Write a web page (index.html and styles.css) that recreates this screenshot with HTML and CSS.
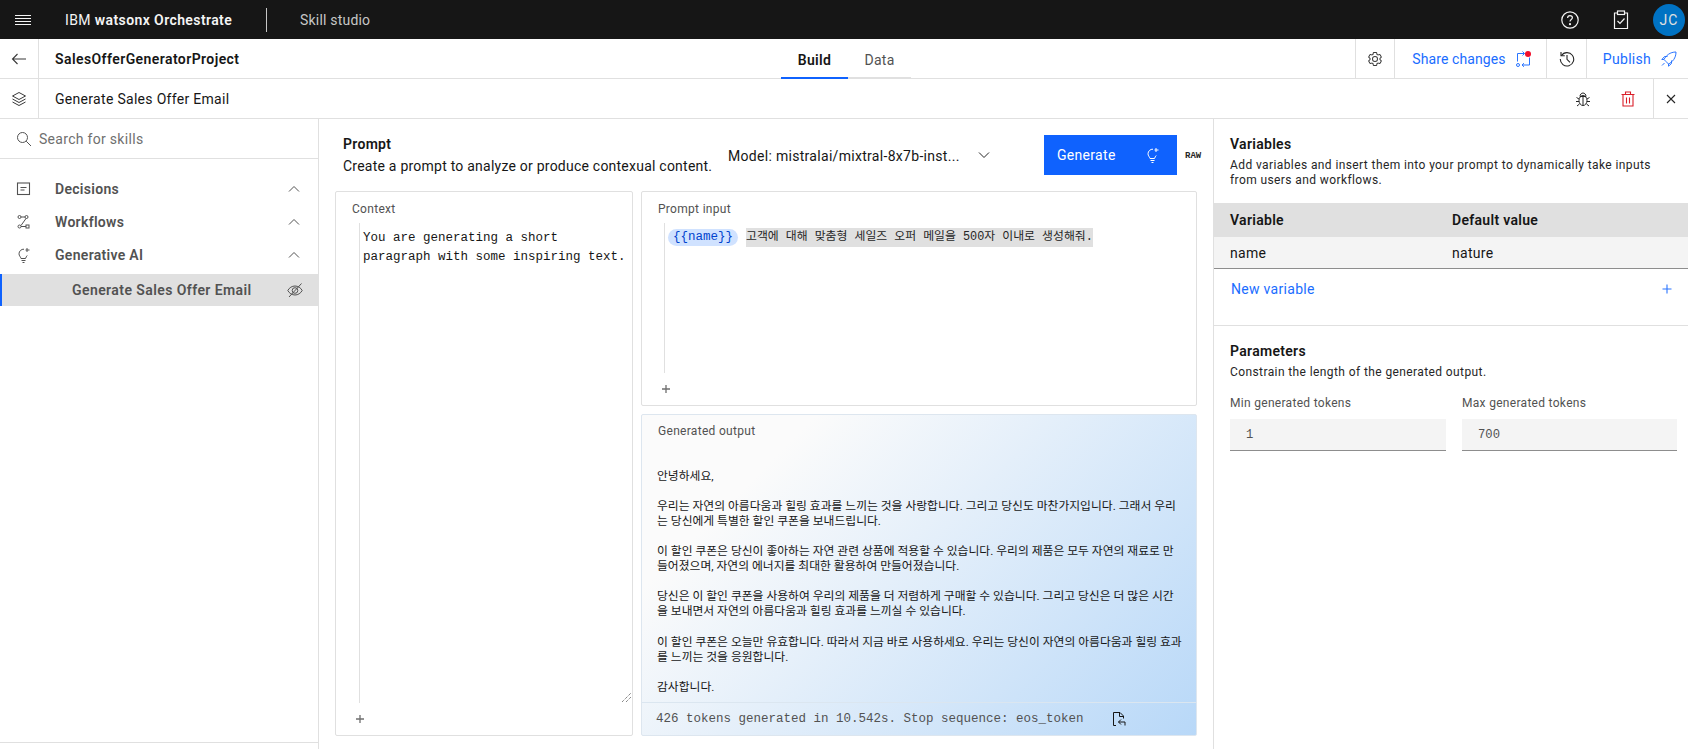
FILE: index.html
```html
<!DOCTYPE html>
<html lang="ko">
<head>
    <meta charset="UTF-8">
    <meta name="viewport" content="width=device-width, initial-scale=1.0">
    <title>Skill studio</title>
    <link rel="stylesheet" href="styles.css">
</head>
<body>
    <header class="topbar">
        <div class="topbar-menu">
            <svg width="20" height="20" viewBox="0 0 20 20" fill="none" stroke="#f4f4f4"><path d="M4 4.5h16M4 7.5h16M4 10.5h16M4 13.5h16" transform="translate(-2 1)"/></svg>
        </div>
        <div class="topbar-brand">IBM <b>watsonx Orchestrate</b></div>
        <div class="topbar-page">Skill studio</div>
        <div class="topbar-right">
            <svg class="topbar-help" width="20" height="20" viewBox="0 0 20 20" fill="none" stroke="#f4f4f4" stroke-width="1.2"><circle cx="10" cy="10" r="8.2"/><path d="M7.6 8c0-1.5 1-2.4 2.4-2.4s2.4.9 2.4 2.2c0 1.7-2.4 1.8-2.4 3.8"/><circle cx="10" cy="14.2" r=".5" fill="#f4f4f4"/></svg>
            <svg class="topbar-tasks" width="18" height="20" viewBox="0 0 18 20" fill="none" stroke="#f4f4f4" stroke-width="1.2"><path d="M5 3H2.5v15.5h13V3H13"/><rect x="5.5" y="1" width="7" height="3.5"/><path d="M5.5 11l2.5 2.5 4.5-5"/></svg>
            <div class="avatar">JC</div>
        </div>
    </header>

    <div class="bar bar-project">
        <div class="bar-icon">
            <svg width="16" height="16" viewBox="0 0 16 16" fill="none" stroke="#393939" stroke-width="1.1"><path d="M15 8H1.5M6.5 3l-5 5 5 5"/></svg>
        </div>
        <div class="project-name">SalesOfferGeneratorProject</div>
        <nav class="tabs">
            <a class="tab tab-active">Build</a>
            <a class="tab">Data</a>
        </nav>
        <div class="bar-actions">
            <div class="action action-settings">
                <svg width="16" height="16" viewBox="0 0 32 32" fill="#393939"><path d="M27,16.76c0-.25,0-.5,0-.76s0-.51,0-.77l1.92-1.68A2,2,0,0,0,29.3,11L26.94,7a2,2,0,0,0-1.73-1,2,2,0,0,0-.64.1l-2.43.82a11.35,11.35,0,0,0-1.31-.75l-.51-2.52a2,2,0,0,0-2-1.61H13.64a2,2,0,0,0-2,1.61l-.51,2.52a11.48,11.48,0,0,0-1.32.75L7.43,6.06A2,2,0,0,0,6.79,6,2,2,0,0,0,5.06,7L2.7,11a2,2,0,0,0,.41,2.51L5,15.24c0,.25,0,.5,0,.76s0,.51,0,.77L3.11,18.45A2,2,0,0,0,2.7,21L5.06,25a2,2,0,0,0,1.73,1,2,2,0,0,0,.64-.1l2.43-.82a11.35,11.35,0,0,0,1.31.75l.51,2.52a2,2,0,0,0,2,1.61h4.72a2,2,0,0,0,2-1.61l.51-2.52a11.48,11.48,0,0,0,1.32-.75l2.42.82a2,2,0,0,0,.64.1,2,2,0,0,0,1.73-1L29.3,21a2,2,0,0,0-.41-2.51ZM25.21,24l-3.43-1.16a8.86,8.86,0,0,1-2.71,1.57L18.36,28H13.64l-.71-3.55a9.36,9.36,0,0,1-2.7-1.57L6.79,24,4.43,20l2.72-2.4a8.9,8.9,0,0,1,0-3.13L4.43,12,6.79,8l3.43,1.16a8.86,8.86,0,0,1,2.71-1.57L13.64,4h4.72l.71,3.55a9.36,9.36,0,0,1,2.7,1.57L25.21,8,27.57,12l-2.72,2.4a8.9,8.9,0,0,1,0,3.13L27.57,20Z"/><path d="M16,22a6,6,0,1,1,6-6A5.94,5.94,0,0,1,16,22Zm0-10a3.91,3.91,0,0,0-4,4,3.91,3.91,0,0,0,4,4,3.91,3.91,0,0,0,4-4A3.91,3.91,0,0,0,16,12Z"/></svg>
            </div>
            <div class="action action-share">
                <span class="link-text">Share changes</span>
                <span class="share-icon">
                    <svg width="16" height="16" viewBox="0 0 16 16" fill="none" stroke="#2a75ff" stroke-width="1"><path d="M1.500 10.500V2.500H8.500M6.500 .5l2 2-2 2"/><circle cx="2" cy="14" r="1.500"/><path d="M13.500 6.500V14H6M8 12.200l-2 1.800 2 1.800"/></svg>
                    <i class="share-dot"></i>
                </span>
            </div>
            <div class="action action-history">
                <svg width="16" height="16" viewBox="0 0 16 16" fill="none" stroke="#262626" stroke-width="1.1"><path d="M2.4 4.6A6.7 6.7 0 1 1 1.3 8"/><path d="M2 1v3.8h3.8"/><path d="M8 4v4.3l3 3"/></svg>
            </div>
            <div class="action action-publish">
                <span class="link-text">Publish</span>
                <svg width="16" height="16" viewBox="0 0 16 16" fill="none" stroke="#2a75ff" stroke-width="1"><path d="M5 10.500L3 8.500c2-4 6-7.500 12-7.500 0 6-3.500 10-7.500 12zM3 8.500H.8l2.700-3h3M7.500 13v2.200l3-2.700v-3M1 14.500l2.500-2.500"/></svg>
            </div>
        </div>
    </div>

    <div class="bar bar-skill">
        <div class="bar-icon">
            <svg width="16" height="16" viewBox="0 0 16 16" fill="none" stroke="#393939" stroke-width="1"><path d="M8 1.500L14.500 5 8 8.500 1.500 5z"/><path d="M1.500 8L8 11.500 14.500 8M1.500 11L8 14.500 14.500 11"/></svg>
        </div>
        <div class="skill-name">Generate Sales Offer Email</div>
        <div class="skill-actions">
            <svg class="icon-bug" width="16" height="16" viewBox="0 0 16 16" fill="none" stroke="#262626" stroke-width="1"><ellipse cx="8" cy="9.500" rx="4" ry="5"/><path d="M5 5.500c0-2 1.300-3.500 3-3.500s3 1.500 3 3.500zM8 6v8.500M4 8L1.500 6.500M12 8l2.500-1.500M4 10.500H1M12 10.500h3M4.500 13L2 15M11.500 13l2.500 2"/></svg>
            <svg class="icon-trash" width="16" height="16" viewBox="0 0 16 16" fill="none" stroke="#da1e28" stroke-width="1.100"><path d="M1.500 3.500h13M3 3.500V15h10V3.500M5.500 3.500V1h5v2.500M6.500 6.500v6M9.500 6.500v6"/></svg>
            <div class="skill-close">
                <svg width="16" height="16" viewBox="0 0 16 16" fill="none" stroke="#262626" stroke-width="1.100"><path d="M4 4l8 8M12 4l-8 8"/></svg>
            </div>
        </div>
    </div>

    <div class="workspace">
        <aside class="sidebar">
            <div class="sidebar-search">
                <svg width="16" height="16" viewBox="0 0 16 16" fill="none" stroke="#525252" stroke-width="1"><circle cx="6.500" cy="6.500" r="5"/><path d="M10.200 10.200L15 15"/></svg>
                <span>Search for skills</span>
            </div>
            <div class="skill-tree">
                <div class="tree-row">
                    <svg width="16" height="16" viewBox="0 0 16 16" fill="none" stroke="#525252" stroke-width="1.100"><rect x="1.500" y="2" width="12" height="11.500"/><path d="M4.500 6.500h6M4.500 9h4"/></svg>
                    <span class="tree-label">Decisions</span>
                    <svg class="chevron" width="16" height="16" viewBox="0 0 16 16" fill="none" stroke="#525252"><path d="M3 10.500l5-5 5 5"/></svg>
                </div>
                <div class="tree-row">
                    <svg width="16" height="16" viewBox="0 0 16 16" fill="none" stroke="#525252" stroke-width="1"><circle cx="3.500" cy="3" r="1.500"/><circle cx="10.500" cy="3" r="1.500"/><path d="M5 3h4M10 4.500L5 11.500"/><circle cx="3.500" cy="12.500" r="1.500"/><rect x="10" y="11" width="3" height="3"/><path d="M5 12.500h5"/></svg>
                    <span class="tree-label">Workflows</span>
                    <svg class="chevron" width="16" height="16" viewBox="0 0 16 16" fill="none" stroke="#525252"><path d="M3 10.500l5-5 5 5"/></svg>
                </div>
                <div class="tree-row">
                    <svg width="16" height="16" viewBox="0 0 16 16" fill="none" stroke="#525252" stroke-width="1"><path d="M8 2.200A4.700 4.700 0 0 0 3 6.800c0 2 1.500 2.800 2 4.700h4.500c.4-1.300 1.100-2.200 1.700-3M5.500 13.500h4M6.500 15.500h2"/><path d="M11 1v4M9.500 3h4"/></svg>
                    <span class="tree-label">Generative AI</span>
                    <svg class="chevron" width="16" height="16" viewBox="0 0 16 16" fill="none" stroke="#525252"><path d="M3 10.500l5-5 5 5"/></svg>
                </div>
                <div class="tree-row tree-row-selected">
                    <span class="tree-label">Generate Sales Offer Email</span>
                    <svg class="eye" width="16" height="16" viewBox="0 0 16 16" fill="none" stroke="#525252" stroke-width="1"><path d="M.8 8.500C2.300 5.700 5 4 8 4s5.700 1.700 7.200 4.500C13.700 11.300 11 13 8 13s-5.700-1.700-7.200-4.500z"/><circle cx="8" cy="8.500" r="2.800"/><path d="M2 15L14.500 1.500"/></svg>
                </div>
            </div>
            <div class="sidebar-foot"></div>
        </aside>

        <main class="editor">
            <div class="editor-head">
                <div class="editor-title">
                    <h2>Prompt</h2>
                    <p>Create a prompt to analyze or produce contexual content.</p>
                </div>
                <div class="model-select">
                    <span>Model: mistralai/mixtral-8x7b-inst...</span>
                    <svg width="16" height="16" viewBox="0 0 16 16" fill="none" stroke="#262626"><path d="M3 5.500l5 5 5-5"/></svg>
                </div>
                <button class="btn-generate">
                    <span>Generate</span>
                    <svg width="16" height="16" viewBox="0 0 16 16" fill="none" stroke="#fff" stroke-width="1"><path d="M8 2.200A4.700 4.700 0 0 0 3 6.800c0 2 1.500 2.800 2 4.700h4.500c.4-1.300 1.100-2.200 1.700-3M5.500 13.500h4M6.500 15.500h2"/><path d="M11 1v4M9.500 3h4"/></svg>
                </button>
                <span class="raw">RAW</span>
            </div>
            <div class="editor-body">
                <section class="card card-context">
                    <div class="card-label">Context</div>
                    <div class="code-area code-context">You are generating a short
paragraph with some inspiring text.</div>
                    <div class="card-plus">
                        <svg width="10" height="10" viewBox="0 0 10 10" stroke="#6f6f6f" stroke-width="1.300"><path d="M5 1v8M1 5h8"/></svg>
                    </div>
                    <svg class="resize-grip" width="9" height="9" viewBox="0 0 9 9" stroke="#555" stroke-width="1" stroke-dasharray="1 1"><path d="M0 9L9 0M4 9l5-5"/></svg>
                </section>
                <div class="editor-right">
                    <section class="card card-input">
                        <div class="card-label">Prompt input</div>
                        <div class="code-area code-input">
                            <span class="var-pill">{{name}}</span><span class="code-selected">고객에 대해 맞춤형 세일즈 오퍼 메일을 500자 이내로 생성해줘.</span>
                        </div>
                        <div class="card-plus">
                            <svg width="10" height="10" viewBox="0 0 10 10" stroke="#6f6f6f" stroke-width="1.300"><path d="M5 1v8M1 5h8"/></svg>
                        </div>
                    </section>
                    <section class="card card-output">
                        <div class="card-label">Generated output</div>
                        <div class="output-text">안녕하세요,

우리는 자연의 아름다움과 힐링 효과를 느끼는 것을 사랑합니다. 그리고 당신도 마찬가지입니다. 그래서 우리
는 당신에게 특별한 할인 쿠폰을 보내드립니다.

이 할인 쿠폰은 당신이 좋아하는 자연 관련 상품에 적용할 수 있습니다. 우리의 제품은 모두 자연의 재료로 만
들어졌으며, 자연의 에너지를 최대한 활용하여 만들어졌습니다.

당신은 이 할인 쿠폰을 사용하여 우리의 제품을 더 저렴하게 구매할 수 있습니다. 그리고 당신은 더 많은 시간
을 보내면서 자연의 아름다움과 힐링 효과를 느끼실 수 있습니다.

이 할인 쿠폰은 오늘만 유효합니다. 따라서 지금 바로 사용하세요. 우리는 당신이 자연의 아름다움과 힐링 효과
를 느끼는 것을 응원합니다.

감사합니다.</div>
                        <div class="output-foot">
                            <span>426 tokens generated in 10.542s. Stop sequence: eos_token</span>
                            <svg width="16" height="16" viewBox="0 0 16 16" fill="none" stroke="#161616" stroke-width="1"><path d="M5 14.500H2.500v-13H9l3.500 3.500v2.500M8.500 1.500V5.500h4"/><path d="M14 14.500V11H7.500M10 8.500L7.500 11l2.500 2.500"/></svg>
                        </div>
                    </section>
                </div>
            </div>
        </main>

        <aside class="panel">
            <section class="panel-vars">
                <h3>Variables</h3>
                <p>Add variables and insert them into your prompt to dynamically take inputs from users and workflows.</p>
            </section>
            <div class="var-table">
                <div class="var-head"><span>Variable</span><span>Default value</span></div>
                <div class="var-row"><span>name</span><span>nature</span></div>
            </div>
            <div class="new-var">
                <span>New variable</span>
                <svg width="10" height="10" viewBox="0 0 10 10" stroke="#2a75ff" stroke-width="1.100"><path d="M5 .5v9M.5 5h9"/></svg>
            </div>
            <section class="panel-params">
                <h3>Parameters</h3>
                <p>Constrain the length of the generated output.</p>
                <div class="param-fields">
                    <label class="param">
                        <span>Min generated tokens</span>
                        <div class="param-input">1</div>
                    </label>
                    <label class="param">
                        <span>Max generated tokens</span>
                        <div class="param-input">700</div>
                    </label>
                </div>
            </section>
        </aside>
    </div>
</body>
</html>
```

FILE: styles.css
```css
* {
    box-sizing: border-box;
}

body {
    margin: 0;
    height: 749px;
    overflow: hidden;
    display: flex;
    flex-direction: column;
    background-color: #fff;
    color: #161616;
    font-family: Roboto, "Noto Sans CJK KR", sans-serif;
    font-size: 14px;
    letter-spacing: 0.3px;
}

svg {
    flex: none;
    display: block;
}

h2, h3, p {
    margin: 0;
}

/* top bar */
.topbar {
    height: 39px;
    flex: none;
    display: flex;
    align-items: center;
    background-color: #161616;
    color: #f4f4f4;
}
.topbar-menu {
    width: 65px;
    padding-left: 13px;
}
.topbar-brand {
    width: 202px;
    height: 24px;
    line-height: 24px;
    letter-spacing: 0.4px;
    border-right: 1px solid #c6c6c6;
}
.topbar-brand b {
    font-weight: 600;
}
.topbar-page {
    padding-left: 33px;
    letter-spacing: 0.2px;
    color: #c6c6c6;
}
.topbar-right {
    margin-left: auto;
    display: flex;
    align-items: center;
    padding-right: 3px;
}
.topbar-help {
    margin-right: 32px;
}
.topbar-tasks {
    margin-right: 23px;
}
.avatar {
    width: 32px;
    height: 32px;
    border-radius: 50%;
    background-color: #0072c3;
    text-align: center;
    line-height: 32px;
    letter-spacing: 1px;
    color: #e0e0e0;
}

/* project and skill bars */
.bar {
    flex: none;
    display: flex;
    align-items: center;
    height: 40px;
    border-bottom: 1px solid #e0e0e0;
}
.bar-project {
    position: relative;
}
.bar-icon {
    width: 39px;
    height: 100%;
    display: flex;
    align-items: center;
    justify-content: center;
    border-right: 1px solid #e0e0e0;
}
.project-name {
    padding-left: 16px;
    font-weight: 600;
    letter-spacing: 0.42px;
}
.tabs {
    position: absolute;
    left: 781px;
    top: 0;
    height: 40px;
    display: flex;
}
.tab {
    width: 63px;
    padding-top: 13px;
    text-align: center;
    color: #525252;
    border-bottom: 2px solid #e0e0e0;
}
.tab-active {
    width: 67px;
    font-weight: 600;
    color: #161616;
    border-bottom-color: #0f62fe;
}
.bar-actions {
    margin-left: auto;
    display: flex;
    height: 100%;
}
.action {
    display: flex;
    align-items: center;
    justify-content: center;
    border-left: 1px solid #e0e0e0;
}
.action-settings {
    width: 39px;
}
.action-share {
    width: 152px;
    gap: 10px;
    padding-left: 3px;
}
.action-share .link-text {
    letter-spacing: 0.1px;
}
.action-history {
    width: 40px;
}
.action-publish {
    width: 102px;
    gap: 10px;
    padding-left: 5px;
}
.link-text {
    color: #1a6dff;
}
.share-icon {
    position: relative;
}
.share-dot {
    position: absolute;
    right: 1px;
    top: 0;
    width: 6px;
    height: 6px;
    border-radius: 50%;
    background-color: #f20f2b;
}
.skill-name {
    padding-left: 16px;
}
.skill-actions {
    margin-left: auto;
    height: 100%;
    display: flex;
    align-items: center;
}
.icon-bug {
    margin-right: 29px;
}
.icon-trash {
    margin-right: 17px;
}
.skill-close {
    width: 35px;
    height: 100%;
    display: flex;
    align-items: center;
    justify-content: center;
    border-left: 1px solid #e0e0e0;
}

/* main columns */
.workspace {
    flex: 1;
    min-height: 0;
    display: flex;
}

/* sidebar */
.sidebar {
    width: 319px;
    flex: none;
    display: flex;
    flex-direction: column;
    border-right: 1px solid #e0e0e0;
}
.sidebar-search {
    height: 40px;
    flex: none;
    display: flex;
    align-items: center;
    gap: 7px;
    padding-left: 16px;
    color: #6f6f6f;
    border-bottom: 1px solid #e0e0e0;
}
.skill-tree {
    flex: 1;
    padding-top: 13px;
}
.tree-row {
    height: 33px;
    display: flex;
    align-items: center;
    padding-left: 16px;
    color: #525252;
    font-weight: 600;
}
.tree-label {
    margin-left: 23px;
}
.chevron {
    margin-left: auto;
    margin-right: 16px;
}
.tree-row-selected {
    height: 32px;
    margin-top: 3px;
    padding-left: 0;
    background-color: #e0e0e0;
    border-left: 2px solid #0f62fe;
}
.tree-row-selected .tree-label {
    margin-left: 70px;
    letter-spacing: 0.42px;
}
.eye {
    margin-left: auto;
    margin-right: 15px;
}
.sidebar-foot {
    height: 7px;
    flex: none;
    border-top: 1px solid #e0e0e0;
}

/* prompt editor */
.editor {
    width: 895px;
    flex: none;
    display: flex;
    flex-direction: column;
    border-right: 1px solid #e0e0e0;
}
.editor-head {
    height: 72px;
    flex: none;
    display: flex;
    padding-left: 24px;
}
.editor-title {
    width: 385px;
    padding-top: 16px;
}
.editor-title h2 {
    font-size: 14px;
    font-weight: 600;
    line-height: 18px;
}
.editor-title p {
    margin-top: 3px;
    line-height: 20px;
    letter-spacing: 0.23px;
    white-space: nowrap;
}
.model-select {
    width: 316px;
    height: 56px;
    padding-top: 27px;
    display: flex;
    gap: 16px;
    line-height: 20px;
    white-space: nowrap;
}
.model-select svg {
    margin-top: 1px;
}
.btn-generate {
    width: 133px;
    height: 40px;
    margin-top: 16px;
    padding: 0 16px 0 13px;
    display: flex;
    align-items: center;
    justify-content: space-between;
    border: none;
    background-color: #0f62fe;
    color: #fff;
    font: inherit;
    letter-spacing: inherit;
}
.raw {
    margin: 31px 0 0 8px;
    font-family: "Liberation Mono", monospace;
    font-size: 9px;
    font-weight: 700;
    letter-spacing: 0;
    line-height: 12px;
    color: #262626;
}
.editor-body {
    flex: 1;
    min-height: 0;
    display: flex;
    gap: 8px;
    padding: 0 16px 13px;
}
.editor-right {
    flex: 1;
    min-width: 0;
    display: flex;
    flex-direction: column;
    gap: 8px;
}
.card {
    position: relative;
    display: flex;
    flex-direction: column;
    border: 1px solid #e0e0e0;
    border-radius: 2px;
}
.card-context {
    width: 298px;
    flex: none;
}
.card-input {
    height: 215px;
    flex: none;
}
.card-label {
    padding: 9px 0 0 16px;
    height: 31px;
    font-size: 12px;
    line-height: 16px;
    color: #525252;
    flex: none;
}
.code-area {
    flex: 1;
    margin-left: 23px;
    padding-left: 3px;
    padding-top: 6px;
    border-left: 1px solid #e0e0e0;
    font-family: "Liberation Mono", "Noto Sans CJK KR", monospace;
    font-size: 12.500px;
    letter-spacing: 0;
    line-height: 19px;
}
.code-context {
    white-space: pre;
}
.code-input {
    padding-left: 3px;
    padding-top: 0;
    display: flex;
    align-items: flex-start;
    margin-left: 22px;
}
.var-pill {
    height: 17px;
    padding: 0 5px;
    margin: 6px 8px 0 0;
    border-radius: 9px;
    background-color: #d0e2ff;
    color: #0043ce;
    line-height: 17px;
    font-size: 12.500px;
}
.code-selected {
    height: 19px;
    margin-top: 5px;
    background-color: #e0e0e0;
    color: #262626;
    line-height: 19px;
    font-size: 11.850px;
    white-space: nowrap;
}
.card-plus {
    height: 32px;
    flex: none;
    padding: 11px 0 0 19px;
}
.resize-grip {
    position: absolute;
    right: 1px;
    bottom: 33px;
}
.card-output {
    flex: 1;
    min-height: 0;
    border-color: #dde6ef;
    background: linear-gradient(135deg, #fbfbfb 20%, #b8d8f8 100%);
}
.card-output .card-label {
    padding-top: 8px;
}
.output-text {
    flex: 1;
    padding: 23px 14px 0 15px;
    font-size: 11.800px;
    line-height: 15.050px;
    letter-spacing: 0;
    white-space: pre;
    color: #161616;
}
.output-foot {
    height: 33px;
    flex: none;
    display: flex;
    align-items: center;
    gap: 27px;
    padding-left: 14px;
    border-top: 1px solid #dbe6f0;
    font-family: "Liberation Mono", monospace;
    font-size: 12.500px;
    letter-spacing: 0;
    color: #525252;
}

/* right panel */
.panel {
    flex: 1;
    min-width: 0;
}
.panel h3 {
    font-size: 14px;
    font-weight: 600;
    line-height: 18px;
}
.panel p {
    font-size: 12px;
    line-height: 15px;
    letter-spacing: 0.4px;
    color: #262626;
}
.panel-vars {
    height: 84px;
    padding: 16px 16px 0;
}
.panel-vars p {
    margin-top: 5px;
}
.var-head, .var-row {
    display: grid;
    grid-template-columns: 222px 1fr;
    align-items: center;
    padding-left: 16px;
}
.var-head {
    height: 34px;
    background-color: #e0e0e0;
    font-weight: 600;
}
.var-row {
    height: 32px;
    background-color: #f4f4f4;
    border-bottom: 1px solid #8d8d8d;
}
.new-var {
    height: 57px;
    padding: 0 16px 17px 17px;
    display: flex;
    align-items: center;
    justify-content: space-between;
    color: #1a6dff;
    border-bottom: 1px solid #e0e0e0;
}
.panel-params {
    padding: 16px 10px 0 16px;
}
.panel-params p {
    margin-top: 5px;
}
.param-fields {
    display: grid;
    grid-template-columns: 216px 215px;
    gap: 16px;
    margin-top: 15px;
}
.param {
    font-size: 12px;
    line-height: 16px;
    color: #525252;
}
.param-input {
    height: 32px;
    margin-top: 8px;
    padding-left: 16px;
    background-color: #f4f4f4;
    border-bottom: 1px solid #8d8d8d;
    font-family: "Liberation Mono", monospace;
    font-size: 12.200px;
    letter-spacing: 0;
    line-height: 32px;
    color: #525252;
}
```
